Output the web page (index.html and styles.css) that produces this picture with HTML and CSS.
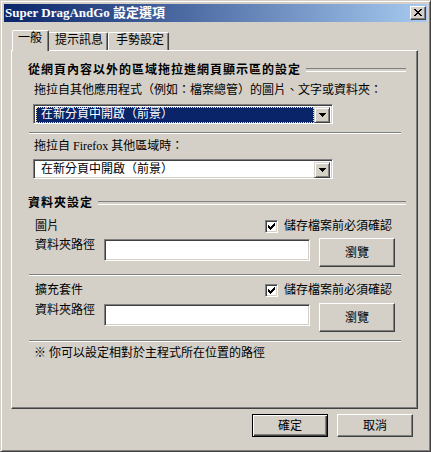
FILE: index.html
```html
<!DOCTYPE html>
<html lang="zh-Hant">
<head>
<meta charset="utf-8">
<title>Super DragAndGo 設定選項</title>
<link rel="stylesheet" href="styles.css">
</head>
<body>
<div class="window">
  <div class="titlebar">
    <span class="title">Super DragAndGo 設定選項</span>
    <span class="close"><svg width="8" height="7" viewBox="0 0 8 7" shape-rendering="crispEdges"><path d="M0 0h2v1H0z M6 0h2v1H6z M1 1h2v1H1z M5 1h2v1H5z M2 2h4v1H2z M3 3h2v1H3z M2 4h4v1H2z M1 5h2v1H1z M5 5h2v1H5z M0 6h2v1H0z M6 6h2v1H6z" fill="#000"/></svg></span>
  </div>
  <div class="body">
    <div class="tabs">
      <div class="tab tab-first active">一般</div>
      <div class="tab">提示訊息</div>
      <div class="tab">手勢設定</div>
    </div>
    <div class="panel">
      <div class="head head-1"><span>從網頁內容以外的區域拖拉進網頁顯示區的設定</span></div>
      <div class="lbl lbl-1">拖拉自其他應用程式（例如：檔案總管）的圖片、文字或資料夾：</div>
      <div class="combo combo-1">
        <div class="val sel">在新分頁中開啟（前景）</div>
        <div class="arrow"><svg width="7" height="4" viewBox="0 0 7 4" shape-rendering="crispEdges"><path d="M0 0h7v1H0z M1 1h5v1H1z M2 2h3v1H2z M3 3h1v1H3z" fill="#000"/></svg></div>
      </div>
      <div class="sep sep-1"></div>
      <div class="lbl lbl-2">拖拉自 Firefox 其他區域時：</div>
      <div class="combo combo-2">
        <div class="val">在新分頁中開啟（前景）</div>
        <div class="arrow"><svg width="7" height="4" viewBox="0 0 7 4" shape-rendering="crispEdges"><path d="M0 0h7v1H0z M1 1h5v1H1z M2 2h3v1H2z M3 3h1v1H3z" fill="#000"/></svg></div>
      </div>
      <div class="head head-2"><span>資料夾設定</span></div>
      <div class="row row-1">
        <span class="name">圖片</span>
        <span class="check"><span class="box"><svg width="7" height="7" viewBox="0 0 7 7" shape-rendering="crispEdges"><path d="M0 2h1v3H0z M1 3h1v3H1z M2 4h1v3H2z M3 3h1v3H3z M4 2h1v3H4z M5 1h1v3H5z M6 0h1v3H6z" fill="#000"/></svg></span>儲存檔案前必須確認</span>
      </div>
      <div class="pathrow pathrow-1">
        <span class="name">資料夾路徑</span>
        <div class="input"></div>
        <div class="btn browse">瀏覽</div>
      </div>
      <div class="sep sep-2"></div>
      <div class="row row-2">
        <span class="name">擴充套件</span>
        <span class="check"><span class="box"><svg width="7" height="7" viewBox="0 0 7 7" shape-rendering="crispEdges"><path d="M0 2h1v3H0z M1 3h1v3H1z M2 4h1v3H2z M3 3h1v3H3z M4 2h1v3H4z M5 1h1v3H5z M6 0h1v3H6z" fill="#000"/></svg></span>儲存檔案前必須確認</span>
      </div>
      <div class="pathrow pathrow-2">
        <span class="name">資料夾路徑</span>
        <div class="input"></div>
        <div class="btn browse">瀏覽</div>
      </div>
      <div class="sep sep-3"></div>
      <div class="note">※ 你可以設定相對於主程式所在位置的路徑</div>
    </div>
    <div class="buttons">
      <div class="btn dlg default">確定</div>
      <div class="btn dlg">取消</div>
    </div>
  </div>
</div>
</body>
</html>
```
FILE: styles.css
```css
* { box-sizing: border-box; }
html, body { margin: 0; padding: 0; }
body {
  width: 431px;
  height: 452px;
  background: #D4D0C8;
  font-family: "Liberation Serif", "Noto Sans CJK TC", serif;
  font-size: 12px;
  color: #000;
  overflow: hidden;
}
.window {
  width: 431px;
  height: 452px;
  background: #D4D0C8;
  border: 1px solid;
  border-color: #D4D0C8 #404040 #404040 #D4D0C8;
  box-shadow: inset 1px 1px #fff, inset -1px -1px #808080;
  padding: 3px;
  display: flex;
  flex-direction: column;
}
.titlebar {
  height: 18px;
  flex: none;
  background: linear-gradient(to right, #0A246A, #A6CAF0);
  display: flex;
  align-items: center;
  justify-content: space-between;
  padding: 0 1px 0 1px;
}
.title {
  color: #fff;
  font-weight: bold;
  font-size: 13px;
  line-height: 16px;
  white-space: nowrap;
}
.close {
  width: 16px;
  height: 14px;
  background: #D4D0C8;
  border: 1px solid;
  border-color: #fff #404040 #404040 #fff;
  box-shadow: inset -1px -1px #808080;
  display: flex;
  align-items: flex-start;
  justify-content: flex-start;
  padding: 2px 0 0 3px;
}
.close svg { display: block; }

.body {
  flex: 1;
  display: flex;
  flex-direction: column;
  padding: 8px 9px 0 7px;
}
.tabs {
  height: 20px;
  flex: none;
  display: flex;
  align-items: flex-end;
  padding-left: 3px;
}
.tab {
  width: 61px;
  height: 18px;
  border: 1px solid;
  border-color: #fff #404040 transparent #fff;
  border-bottom: none;
  box-shadow: inset -1px 0 #808080;
  border-radius: 2px 2px 0 0;
  padding-left: 7px;
  line-height: 15px;
  white-space: nowrap;
}
.tab-first { width: 33px; }
.tab.active {
  width: 37px;
  height: 21px;
  margin: 0 -2px -1px -2px;
  position: relative;
  z-index: 1;
  background: #D4D0C8;
  padding-left: 5px;
  line-height: 14px;
}
.panel {
  height: 359px;
  flex: none;
  border: 1px solid;
  border-color: #fff #404040 #404040 #fff;
  box-shadow: inset -1px -1px #808080;
  padding: 1px;
  display: flex;
  flex-direction: column;
  align-items: flex-start;
}
.head {
  align-self: stretch;
  display: flex;
  align-items: center;
  height: 14px;
  line-height: 14px;
  margin: 0 10px 0 15px;
  font-weight: bold;
  letter-spacing: 1px;
  white-space: nowrap;
}
.head::after {
  content: "";
  flex: 1;
  height: 2px;
  border-top: 1px solid #808080;
  border-bottom: 1px solid #fff;
  margin-left: 5px;
}
.head-1 { margin-top: 11px; }
.head-2 { margin-top: 17px; }

.lbl {
  margin-left: 21px;
  height: 14px;
  line-height: 14px;
  white-space: nowrap;
}
.lbl-1 { margin-top: 6px; }
.lbl-2 { margin-top: 5px; }

.combo {
  margin-left: 20px;
  width: 300px;
  height: 20px;
  display: flex;
  border: 1px solid;
  border-color: #808080 #fff #fff #808080;
  box-shadow: inset 1px 1px #404040, inset -1px -1px #D4D0C8;
  padding: 2px;
  background: #fff;
}
.combo-1 { margin-top: 7px; }
.combo-2 { margin-top: 6px; }
.combo .val {
  flex: 1;
  padding-left: 5px;
  height: 16px;
  line-height: 15px;
  white-space: nowrap;
  overflow: hidden;
}
.combo .val.sel {
  background: #0A246A;
  color: #fff;
  outline: 1px dotted #F5DB95;
  outline-offset: -1px;
}
.arrow {
  width: 16px;
  height: 16px;
  flex: none;
  background: #D4D0C8;
  border: 1px solid;
  border-color: #D4D0C8 #404040 #404040 #D4D0C8;
  box-shadow: inset 1px 1px #fff, inset -1px -1px #808080;
  display: flex;
  align-items: center;
  justify-content: center;
}
.arrow svg { display: block; }

.sep {
  align-self: stretch;
  height: 2px;
  border-top: 1px solid #808080;
  border-bottom: 1px solid #fff;
  margin: 0 15px 0 16px;
}
.sep-1 { margin-top: 8px; }
.sep-2 { margin-top: 7px; }
.sep-3 { margin-top: 8px; }

.row {
  display: flex;
  align-items: center;
  margin-left: 22px;
  height: 14px;
  line-height: 14px;
}
.row-1 { margin-top: 9px; }
.row-2 { margin-top: 7px; }
.row .name { width: 230px; }
.check {
  display: flex;
  align-items: center;
  gap: 6px;
  white-space: nowrap;
}
.box {
  width: 13px;
  height: 13px;
  background: #fff;
  border: 1px solid;
  border-color: #808080 #fff #fff #808080;
  box-shadow: inset 1px 1px #404040, inset -1px -1px #D4D0C8;
  padding: 2px;
}
.box svg { display: block; }

.pathrow {
  display: flex;
  align-items: flex-start;
  margin-left: 22px;
}
.pathrow-1 { margin-top: 5px; }
.pathrow-2 { margin-top: 6px; }
.pathrow .name {
  width: 69px;
  line-height: 14px;
  white-space: nowrap;
}
.input {
  width: 206px;
  height: 22px;
  margin-top: 1px;
  background: #fff;
  border: 1px solid;
  border-color: #808080 #fff #fff #808080;
  box-shadow: inset 1px 1px #404040, inset -1px -1px #D4D0C8;
}
.btn {
  background: #D4D0C8;
  border: 1px solid;
  border-color: #fff #404040 #404040 #fff;
  box-shadow: inset -1px -1px #808080;
  display: flex;
  align-items: center;
  justify-content: center;
  line-height: 14px;
  white-space: nowrap;
}
.browse {
  width: 76px;
  height: 29px;
  margin-left: 9px;
}
.note {
  margin: 4px 0 0 21px;
  height: 14px;
  line-height: 14px;
  white-space: nowrap;
}
.buttons {
  display: flex;
  justify-content: flex-end;
  gap: 9px;
  margin-top: 5px;
  padding-right: 5px;
}
.dlg {
  width: 76px;
  height: 23px;
}
.dlg.default {
  border-color: #000;
  box-shadow: inset 1px 1px #fff, inset -1px -1px #404040, inset -2px -2px #808080;
}
```
